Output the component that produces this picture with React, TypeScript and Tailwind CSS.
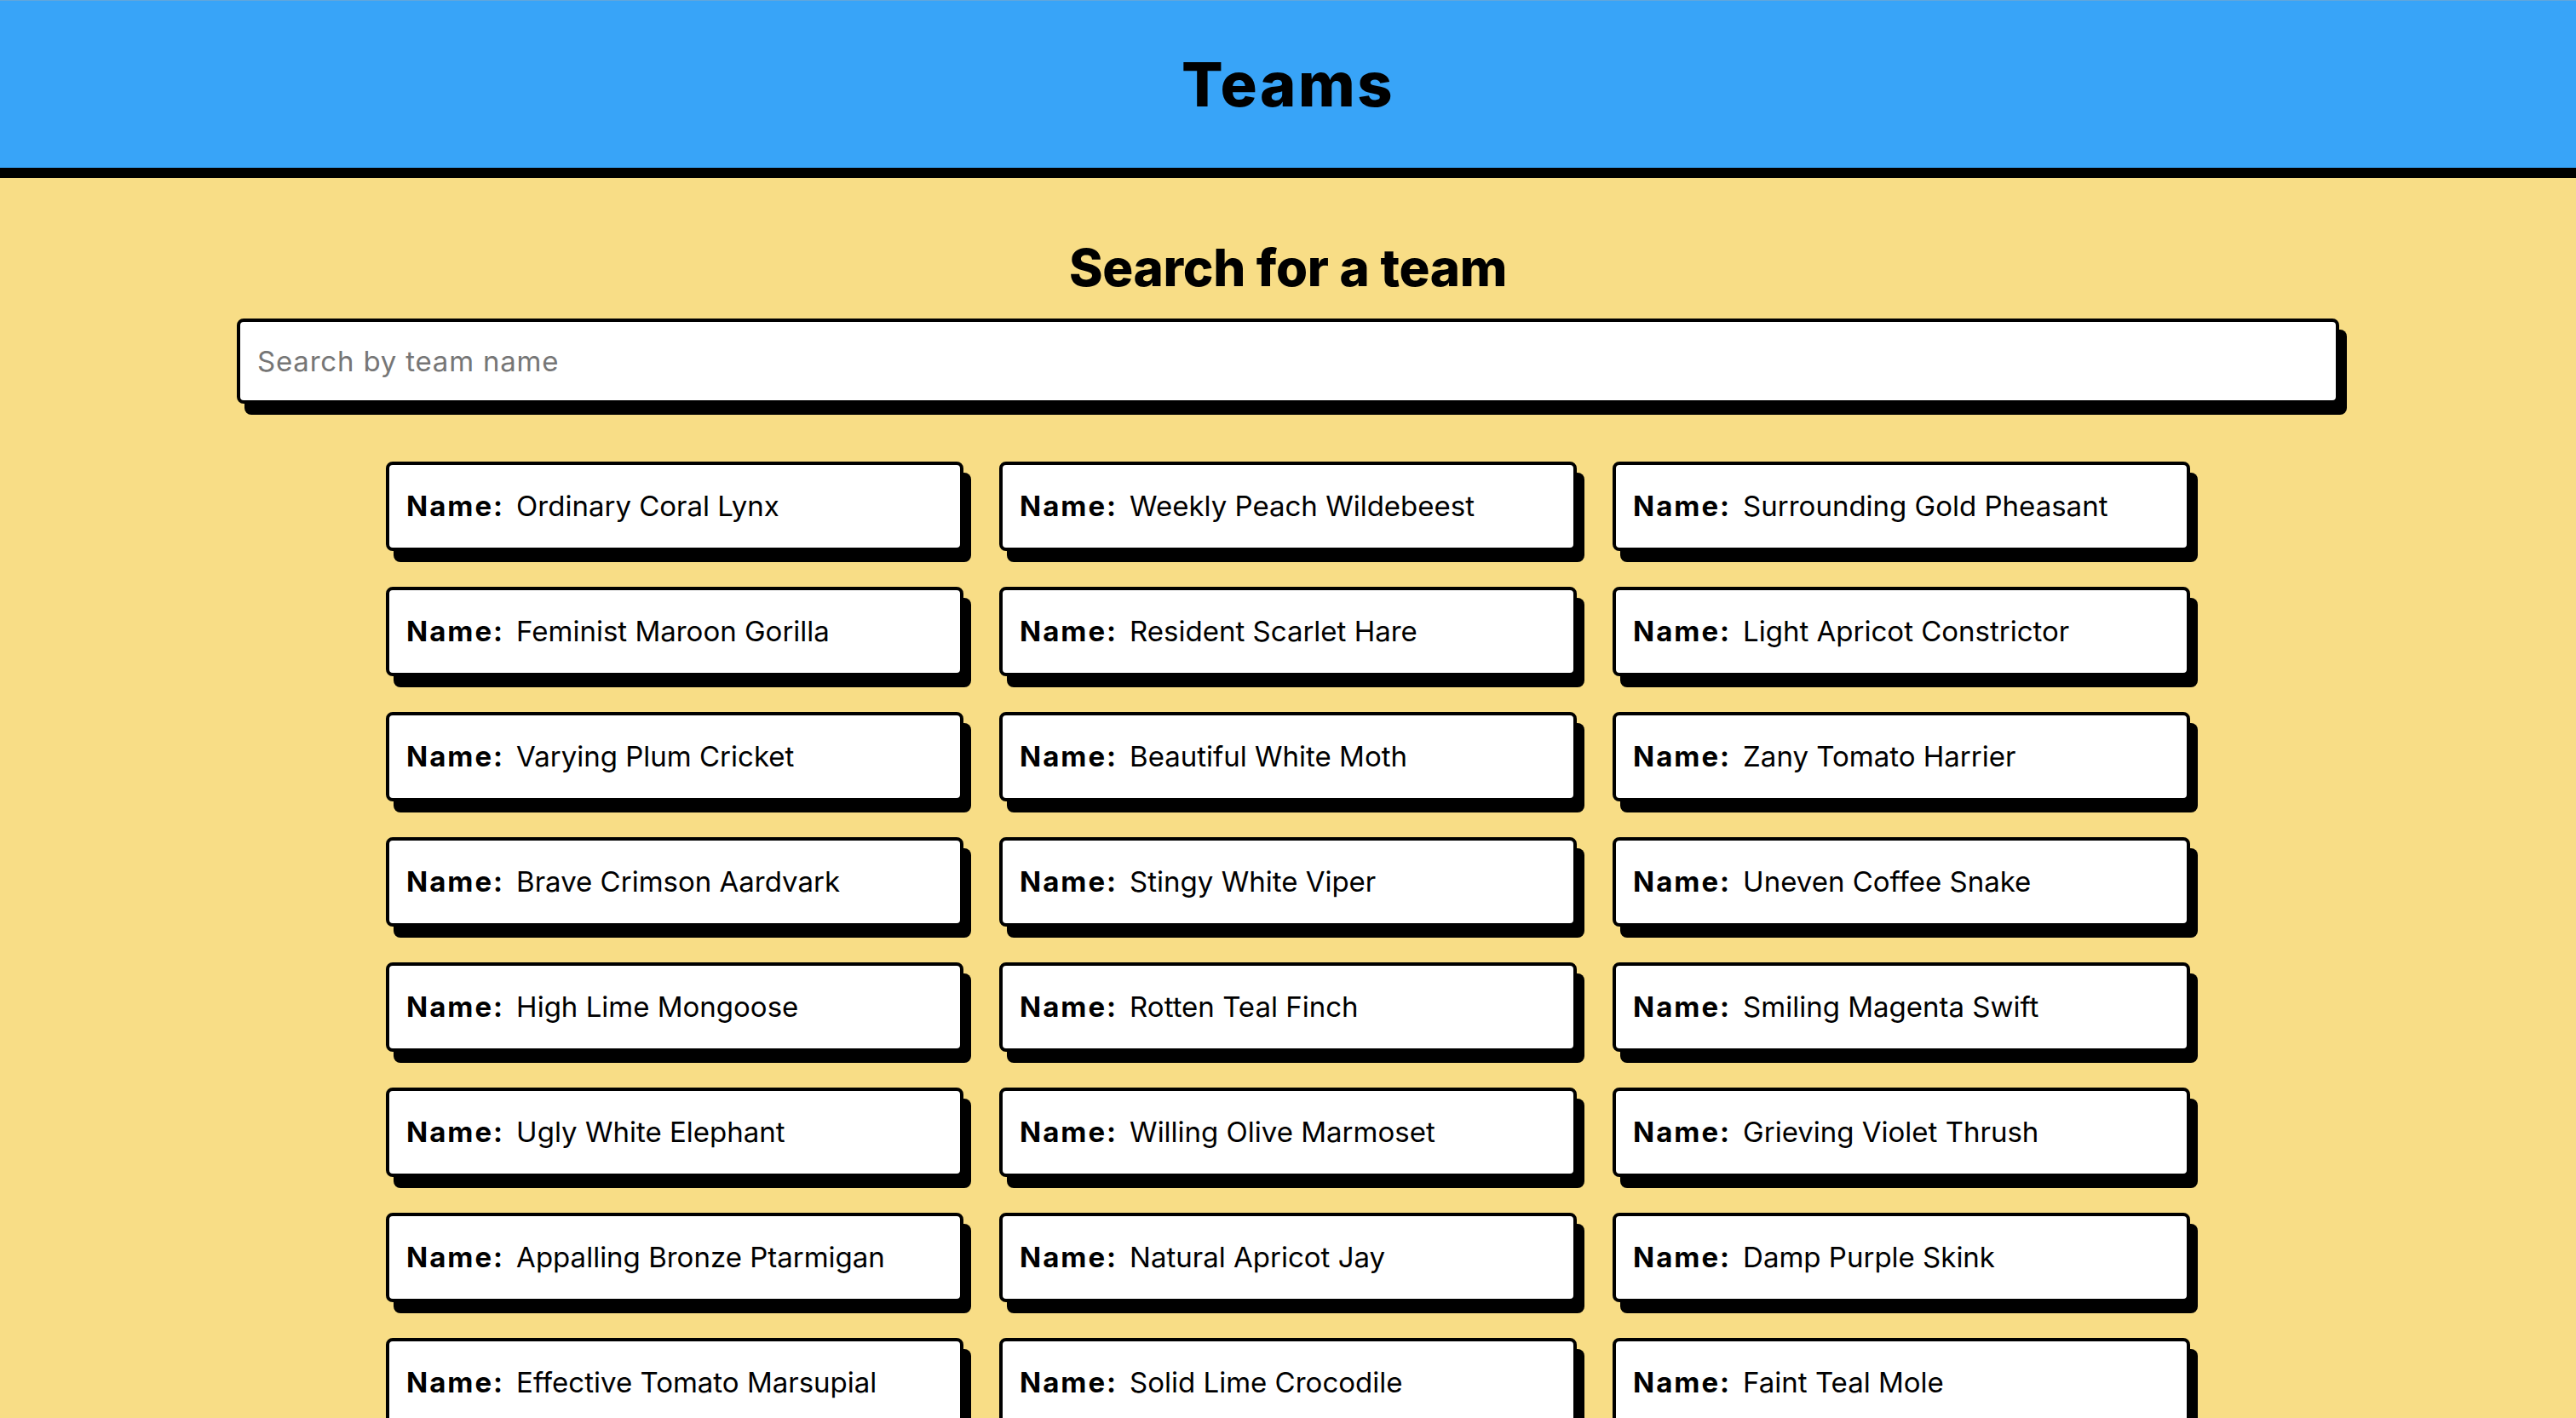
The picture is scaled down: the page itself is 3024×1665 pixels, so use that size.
const teams = [
  'Ordinary Coral Lynx',
  'Weekly Peach Wildebeest',
  'Surrounding Gold Pheasant',
  'Feminist Maroon Gorilla',
  'Resident Scarlet Hare',
  'Light Apricot Constrictor',
  'Varying Plum Cricket',
  'Beautiful White Moth',
  'Zany Tomato Harrier',
  'Brave Crimson Aardvark',
  'Stingy White Viper',
  'Uneven Coffee Snake',
  'High Lime Mongoose',
  'Rotten Teal Finch',
  'Smiling Magenta Swift',
  'Ugly White Elephant',
  'Willing Olive Marmoset',
  'Grieving Violet Thrush',
  'Appalling Bronze Ptarmigan',
  'Natural Apricot Jay',
  'Damp Purple Skink',
  'Effective Tomato Marsupial',
  'Solid Lime Crocodile',
  'Faint Teal Mole',
];

function TeamCard({ name }: { name: string }) {
  return (
    <div className="h-[105px] flex items-center gap-[14px] px-[20px] bg-white border-[4px] border-black rounded-[8px] shadow-[9px_13px_0_0_#000] text-[33px] leading-none">
      <span className="font-bold tracking-[2px]">Name:</span>
      <span>{name}</span>
    </div>
  );
}

export default function App() {
  return (
    <div className="min-h-screen bg-[#f8dd86] font-['Inter','Noto_Sans',sans-serif] text-black">
      {/* Header bar */}
      <header className="h-[209px] bg-[#38a4f8] border-t-[1px] border-t-[#62a6dc] border-b-[12px] border-b-black flex items-center justify-center">
        <h1 className="text-[72px] font-extrabold leading-none tracking-[2.5px]">Teams</h1>
      </header>

      <main className="px-[278px] pt-[75px] pb-[80px]">
        <h2 className="text-center text-[60px] font-extrabold leading-[60px] tracking-[-0.3px]">Search for a team</h2>
        <input
          type="text"
          placeholder="Search by team name"
          className="mt-[30px] block w-full h-[100px] bg-white border-[4px] border-black rounded-[8px] shadow-[9px_13px_0_0_#000] px-[20px] text-[33px] tracking-[0.8px] placeholder:text-[#767676] outline-none"
        />

        {/* Team list */}
        <div className="mt-[68px] grid grid-cols-[repeat(3,678px)] justify-center gap-[42px]">
          {teams.map((t) => (
            <TeamCard key={t} name={t} />
          ))}
        </div>
      </main>
    </div>
  );
}
